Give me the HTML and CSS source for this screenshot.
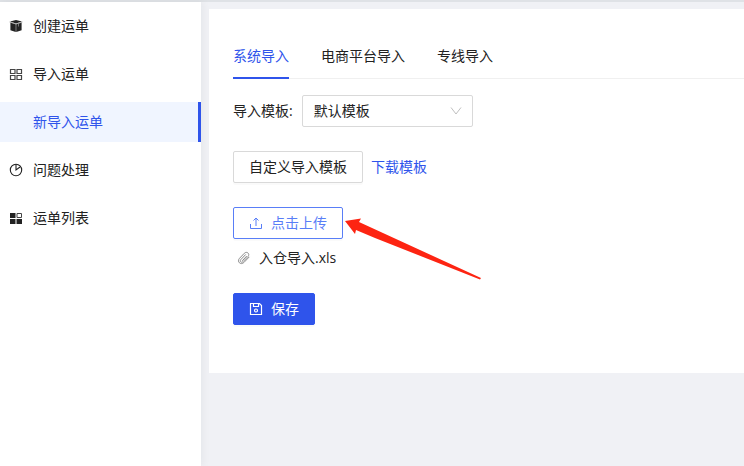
FILE: index.html
```html
<!DOCTYPE html>
<html lang="zh-CN">
<head>
    <meta charset="UTF-8">
    <meta name="viewport" content="width=device-width, initial-scale=1">
    <title>新导入运单</title>
    <link rel="stylesheet" href="styles.css">
</head>
<body>
    <div class="layout">
        <nav class="sidebar">
            <a class="menu-item" href="#create">
                <svg class="menu-icon" viewBox="0 0 14 14">
                    <path d="M7 1 13 2.6 7 4.6 1 2.6Z" fill="#222"/>
                    <path d="M1.4 3.6 6.8 5.2V13L1.4 11.3ZM12.6 3.6 7.2 5.2V13l5.4-1.7Z" fill="#222"/>
                    <path d="M.5 3 7 5l6.5-2M9.5 4.5v3" fill="none" stroke="#999" stroke-width=".7"/>
                </svg>
                <span>创建运单</span>
            </a>
            <a class="menu-item" href="#import">
                <svg class="menu-icon" viewBox="0 0 14 14" fill="none" stroke="#444" stroke-width="1.2">
                    <path d="M1.5 2.5H6v4H1.5ZM8 2.5h4.5v4H8ZM1.5 8.5H6v4H1.5ZM8 8.5h4.5v4H8Z"/>
                </svg>
                <span>导入运单</span>
            </a>
            <a class="menu-item active" href="#new-import">
                <span>新导入运单</span>
            </a>
            <a class="menu-item" href="#problem">
                <svg class="menu-icon" viewBox="0 0 14 14" fill="none" stroke="#222" stroke-width="1.1">
                    <circle cx="7" cy="7" r="5.7"/>
                    <path d="M7 1.3V7l4-3"/>
                </svg>
                <span>问题处理</span>
            </a>
            <a class="menu-item" href="#list">
                <svg class="menu-icon" viewBox="0 0 14 14" fill="#222">
                    <path d="M1 2h5.5v5H1ZM1 8h5.5v5H1ZM7.5 8H13v5H7.500Z"/>
                    <path d="M8 2.5h4.5v4H8Z" fill="none" stroke="#444"/>
                </svg>
                <span>运单列表</span>
            </a>
        </nav>

        <main class="content">
            <div class="panel">
                <div class="tabs" role="tablist">
                    <button class="tab active" type="button" role="tab" aria-selected="true">系统导入</button>
                    <button class="tab" type="button" role="tab" aria-selected="false">电商平台导入</button>
                    <button class="tab" type="button" role="tab" aria-selected="false">专线导入</button>
                </div>

                <form class="import-form">
                    <div class="form-row">
                        <label class="form-label" for="template">导入模板:</label>
                        <div class="select-box">
                            <select id="template" class="select">
                                <option>默认模板</option>
                            </select>
                            <svg class="select-arrow" viewBox="0 0 12 12" fill="none" stroke="#bfbfbf">
                                <path d="M1 2.5 6 9l5-6.5"/>
                            </svg>
                        </div>
                    </div>

                    <div class="form-row">
                        <button class="button" type="button">自定义导入模板</button>
                        <a class="link" href="#download">下载模板</a>
                    </div>

                    <div class="upload">
                        <button class="button button-upload" type="button">
                            <svg class="button-icon" viewBox="0 0 14 14" fill="none" stroke="currentColor">
                                <path d="M1.5 8v4.5h11V8M7 10V2.5M4.5 4.5 7 2l2.5 2.5"/>
                            </svg>
                            <span>点击上传</span>
                        </button>
                        <svg class="arrow" viewBox="0 0 138 64">
                            <path d="M2 3 18 .5 16 4 138 60 137 61.500 32 20 13 12 12 16Z" fill="#fd2412"/>
                        </svg>
                        <div class="file">
                            <svg class="file-icon" viewBox="0 0 14 14" fill="none" stroke="#8c8c8c" stroke-linecap="round">
                                <path d="M5.500 9.500 9.500 5.300M8.500 3.700 3.800 8.600c-1.500 1.800.6 3.600 2.200 2.100l5-5.200c2.300-2.700-1.200-5.700-3.700-3.200L2.500 7.300c-3 3.400 1.300 7.200 4.400 4.200L12 6.200"/>
                            </svg>
                            <span>入仓导入.xls</span>
                        </div>
                    </div>

                    <button class="button button-primary" type="submit">
                        <svg class="button-icon" viewBox="0 0 14 14" fill="none" stroke="currentColor" stroke-width="1.2">
                            <path d="M1.500 1.500h9l2 2v9h-11ZM4.500 1.500v3h5v-3"/>
                            <circle cx="7" cy="8.500" r="1.500"/>
                        </svg>
                        <span>保存</span>
                    </button>
                </form>
            </div>
        </main>
    </div>
</body>
</html>
```

FILE: styles.css
```css
* {
    box-sizing: border-box;
}
body {
    margin: 0;
    background-color: #f0f1f5;
    color: #222;
    font-family: "Open Sans", "Noto Sans CJK SC", sans-serif;
    font-size: 14px;
    line-height: 22px;
}
a {
    text-decoration: none;
}
button,
select {
    font: inherit;
    color: inherit;
}
svg {
    display: block;
    flex: none;
}
.layout {
    display: flex;
    min-height: 100vh;
    border-top: 2px solid #dfe2e6;
}

/* sidebar */
.sidebar {
    flex: none;
    width: 201px;
    padding-top: 4px;
    background-color: #fff;
    box-shadow: 2px 0 8px rgba(29, 35, 41, 0.05);
}
.menu-item {
    display: flex;
    align-items: center;
    gap: 10px;
    height: 40px;
    margin-bottom: 8px;
    padding-left: 9px;
    color: #222;
}
.menu-item.active {
    padding-left: 33px;
    border-right: 3px solid #2f54eb;
    background-color: #f0f5ff;
    color: #2f54eb;
}
.menu-icon {
    width: 14px;
    height: 14px;
}

/* content */
.content {
    flex: 1;
    min-width: 0;
    padding: 7px 0 0 8px;
}
.panel {
    padding: 24px 0 48px 24px;
    background-color: #fff;
}
.tabs {
    display: flex;
    gap: 32px;
    margin-bottom: 16px;
    box-shadow: inset 0 -1px #f0f0f0;
}
.tab {
    height: 46px;
    padding: 2px 0 0;
    border: none;
    border-bottom: 2px solid transparent;
    background: none;
    cursor: pointer;
}
.tab.active {
    border-bottom-color: #2f54eb;
    color: #2f54eb;
}

/* form */
.import-form {
    display: flex;
    flex-direction: column;
    align-items: flex-start;
    gap: 24px;
}
.form-row {
    display: flex;
    align-items: center;
    gap: 8px;
}
.form-label {
    padding-right: 1px;
}
.select-box {
    position: relative;
}
.select {
    display: block;
    width: 171px;
    height: 32px;
    padding: 0 11px;
    border: 1px solid #d9d9d9;
    border-radius: 2px;
    background-color: #fff;
    appearance: none;
}
.select-arrow {
    position: absolute;
    top: 10px;
    right: 11px;
    width: 12px;
    height: 12px;
    pointer-events: none;
}
.button {
    display: flex;
    align-items: center;
    gap: 8px;
    height: 32px;
    padding: 0 15px;
    border: 1px solid #d9d9d9;
    border-radius: 2px;
    background-color: #fff;
    box-shadow: 0 2px 0 rgba(0, 0, 0, 0.02);
    cursor: pointer;
}
.button-icon {
    width: 14px;
    height: 14px;
}
.button-upload {
    border-color: #597ef7;
    color: #597ef7;
}
.button-primary {
    border-color: #2f54eb;
    background-color: #2f54eb;
    color: #fff;
}
.link {
    color: #2f54eb;
}
.upload {
    position: relative;
}
.arrow {
    position: absolute;
    top: 11px;
    left: 110px;
    width: 138px;
    height: 64px;
}
.file {
    display: flex;
    align-items: center;
    gap: 8px;
    margin-top: 8px;
    padding-left: 4px;
}
.file-icon {
    width: 14px;
    height: 14px;
}
```
